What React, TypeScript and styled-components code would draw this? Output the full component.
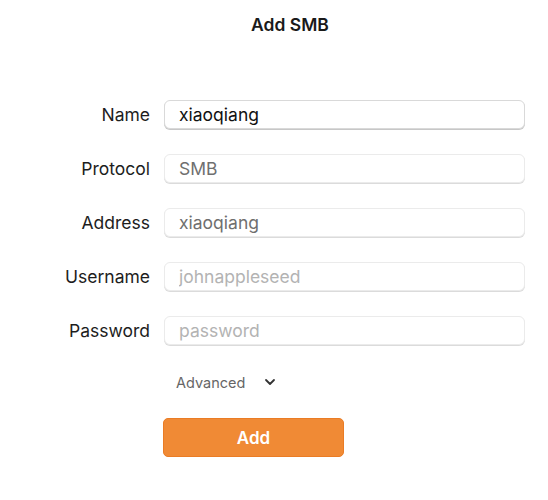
import React from "react";
import styled, { createGlobalStyle } from "styled-components";

const Global = createGlobalStyle`
  html, body { margin: 0; padding: 0; background: #ffffff; }
  body { font-family: Inter, "Liberation Sans", sans-serif; color: #1d1d1f; }
  * { box-sizing: border-box; }
`;

const Page = styled.div`
  width: 548px;
  height: 500px;
  display: flex;
  flex-direction: column;
  background: #fff;
`;

const Title = styled.h1`
  margin: 0;
  padding-top: 13px;
  padding-left: 32px;
  text-align: center;
  font-size: 17.5px;
  font-weight: 600;
  line-height: 23px;
  color: #1a1a1a;
`;

const Form = styled.div`
  margin-top: 64px;
  display: grid;
  grid-template-columns: 150px 361px;
  column-gap: 14px;
  row-gap: 25px;
  align-items: center;
`;

const Label = styled.label`
  text-align: right;
  font-size: 17.5px;
  color: #1d1d1d;
  line-height: 29px;
`;

const Field = styled.input<{ $strong?: boolean; $muted?: boolean }>`
  height: 29px;
  width: 100%;
  border-radius: 6px;
  border: 1px solid ${(p) => (p.$strong ? "#d9d9d9" : "#ebebeb")};
  box-shadow: 0 1px 0.5px rgba(0, 0, 0, ${(p) => (p.$strong ? 0.22 : 0.14)});
  padding: 0 14px;
  font-family: inherit;
  font-size: 17.5px;
  color: ${(p) => (p.$muted ? "#6f6f6f" : "#111")};
  background: #fff;
  outline: none;
  &::placeholder {
    color: #b3b3b3;
  }
`;

const Spacer = styled.div``;

const Advanced = styled.div`
  display: flex;
  align-items: center;
  gap: 19px;
  padding-left: 12px;
  margin-top: 2px;
  font-size: 14.5px;
  color: #666;
  height: 20px;
`;

const AddButton = styled.button`
  width: 181px;
  height: 39px;
  margin-top: 1px;
  margin-left: -1px;
  border-radius: 5px;
  border: 1px solid #ea7c25;
  background: #f08a35;
  color: #fff;
  font-family: inherit;
  font-size: 17px;
  font-weight: 600;
`;

const Chevron = () => (
  <svg width="12" height="8" viewBox="0 0 12 8" fill="none">
    <path d="M2 2 L6 6 L10 2" stroke="#333" strokeWidth="1.8" strokeLinecap="round" strokeLinejoin="round" />
  </svg>
);

export default function App() {
  return (
    <Page>
      <Global />
      <Title>Add SMB</Title>
      <Form>
        <Label>Name</Label>
        <Field $strong readOnly value="xiaoqiang" />
        <Label>Protocol</Label>
        <Field $muted readOnly value="SMB" />
        <Label>Address</Label>
        <Field $muted readOnly value="xiaoqiang" />
        <Label>Username</Label>
        <Field readOnly placeholder="johnappleseed" />
        <Label>Password</Label>
        <Field readOnly placeholder="password" />
        <Spacer />
        <Advanced>
          <span>Advanced</span>
          <Chevron />
        </Advanced>
        <Spacer />
        <AddButton>Add</AddButton>
      </Form>
    </Page>
  );
}
